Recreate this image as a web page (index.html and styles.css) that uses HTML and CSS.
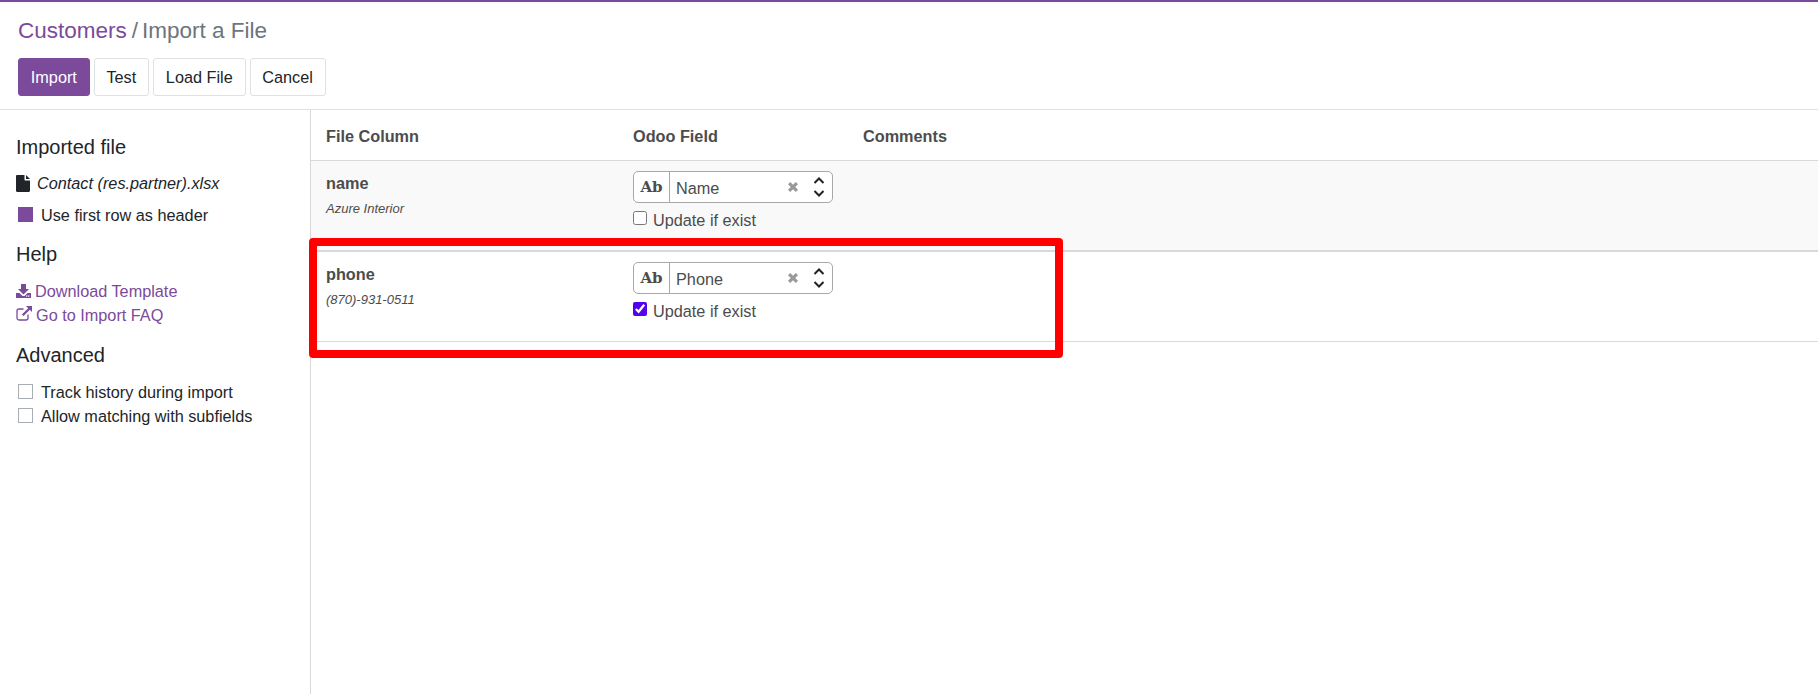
FILE: index.html
```html
<!DOCTYPE html>
<html lang="en">
<head>
<meta charset="utf-8">
<title>Import a File</title>
<link rel="stylesheet" href="styles.css">
</head>
<body>
<header class="control-panel">
  <div class="breadcrumb"><a class="crumb-link">Customers</a><span class="crumb-sep">/</span><span class="crumb-current">Import a File</span></div>
  <div class="buttons">
    <button class="btn btn-primary">Import</button>
    <button class="btn">Test</button>
    <button class="btn">Load File</button>
    <button class="btn">Cancel</button>
  </div>
</header>
<main class="content">
  <aside class="sidebar">
    <h4 class="side-title first">Imported file</h4>
    <div class="file-row">
      <svg class="icon-file" viewBox="0 0 14 17" preserveAspectRatio="none"><path d="M0 1.200C0 .5.5 0 1.200 0H8.500v4.800c0 .4.300.7.700.7H14v10.300c0 .7-.5 1.200-1.200 1.200H1.200C.5 17 0 16.500 0 15.800zM10 0l4 4h-4z"/></svg>
      <em>Contact (res.partner).xlsx</em>
    </div>
    <div class="check-row"><span class="box box-on"></span>Use first row as header</div>
    <h4 class="side-title help">Help</h4>
    <div class="links">
      <a class="side-link">
        <svg class="icon-dl" viewBox="0 0 15 14"><path d="M5 0h5v5h3L7.500 10.500 2 5h3zM0 9h3.500l2.500 2.500c.8.800 2.200.800 3 0L11.500 9H15v5H0zm11.500 3a.7.7 0 1 0 0 .1zm2 0a.7.7 0 1 0 0 .1z" fill-rule="evenodd"/></svg>Download Template</a>
      <a class="side-link">
        <svg class="icon-ext" viewBox="0 0 16 15"><path d="M12 8.500V12a2 2 0 0 1-2 2H3a2 2 0 0 1-2-2V5a2 2 0 0 1 2-2h4.500" fill="none" stroke="currentColor" stroke-width="1.300"/><path d="M10 0h6v6l-2.200-2.200-6.300 6.300-1.600-1.600 6.300-6.300z"/></svg>Go to Import FAQ</a>
    </div>
    <h4 class="side-title advanced">Advanced</h4>
    <div class="check-row tight"><span class="box"></span>Track history during import</div>
    <div class="check-row tight"><span class="box"></span>Allow matching with subfields</div>
  </aside>
  <section class="mapping">
    <div class="row head">
      <div class="col-a">File Column</div>
      <div class="col-b">Odoo Field</div>
      <div class="col-c">Comments</div>
    </div>
    <div class="row item odd">
      <div class="col-a"><div class="col-name">name</div><div class="col-sample">Azure Interior</div></div>
      <div class="col-b">
        <div class="select">
          <span class="type">Ab</span><span class="value">Name</span>
          <svg class="clear" viewBox="0 0 10 10"><path d="M0 2.200 2.200 0 5 2.800 7.800 0 10 2.200 7.200 5 10 7.800 7.800 10 5 7.200 2.200 10 0 7.800 2.800 5z"/></svg>
          <svg class="carets" viewBox="0 0 12 22"><path d="M1.500 7 6 2.500 10.500 7M1.500 15 6 19.500 10.500 15" fill="none" stroke="currentColor" stroke-width="2"/></svg>
        </div>
        <label class="update"><input type="checkbox" class="native">Update if exist</label>
      </div>
    </div>
    <div class="row item">
      <div class="col-a"><div class="col-name">phone</div><div class="col-sample">(870)-931-0511</div></div>
      <div class="col-b">
        <div class="select">
          <span class="type">Ab</span><span class="value">Phone</span>
          <svg class="clear" viewBox="0 0 10 10"><path d="M0 2.200 2.200 0 5 2.800 7.800 0 10 2.200 7.200 5 10 7.800 7.800 10 5 7.200 2.200 10 0 7.800 2.800 5z"/></svg>
          <svg class="carets" viewBox="0 0 12 22"><path d="M1.500 7 6 2.500 10.500 7M1.500 15 6 19.500 10.500 15" fill="none" stroke="currentColor" stroke-width="2"/></svg>
        </div>
        <label class="update"><input type="checkbox" class="native" checked>Update if exist</label>
      </div>
    </div>
  </section>
</main>
<div class="highlight"></div>
</body>
</html>
```
FILE: styles.css
```css
* { box-sizing: border-box; }
html, body { height: 100%; }
body {
  margin: 0;
  height: 694px;
  overflow: hidden;
  display: flex;
  flex-direction: column;
  background: #fff;
  color: #212529;
  font-family: "Liberation Sans", Arial, sans-serif;
  font-size: 16.25px;
  border-top: 2px solid #7c4a9b;
  position: relative;
}
.control-panel {
  height: 108px;
  padding: 15px 18px 0;
  border-bottom: 1px solid #dee2e6;
  flex: none;
}
.breadcrumb {
  font-size: 22.5px;
  line-height: 28px;
  display: flex;
  color: #6c757d;
}
.crumb-link { color: #7c4a9b; }
.crumb-sep { margin: 0 4px 0 5px; }
.buttons {
  display: flex;
  gap: 4px;
  margin-top: 13px;
}
.btn {
  height: 38px;
  padding: 1px 11.8px 0;
  font: inherit;
  color: #212529;
  background: #fff;
  border: 1px solid #dee2e6;
  border-radius: 3px;
}
.btn-primary {
  background: #7c4a9b;
  border-color: #7c4a9b;
  color: #fff;
}
.content {
  flex: 1;
  display: flex;
  min-height: 0;
}
.sidebar {
  width: 311px;
  flex: none;
  border-right: 1px solid #d9d9d9;
  padding: 0 16px;
}
.side-title {
  font-size: 20px;
  font-weight: 400;
  line-height: 24px;
  margin: 0;
}
.side-title.first { margin-top: 25px; }
.side-title.help { margin-top: 15px; }
.side-title.advanced { margin-top: 16px; }
.file-row {
  display: flex;
  align-items: center;
  margin-top: 12px;
  line-height: 24px;
}
.icon-file { width: 14px; height: 17px; margin-right: 7px; fill: #212529; }
.check-row {
  display: flex;
  align-items: center;
  margin-top: 8px;
  line-height: 24px;
  padding-left: 2px;
}
.check-row.tight { margin-top: 0; }
.advanced + .check-row { margin-top: 13px; }
.box {
  width: 15px;
  height: 15px;
  margin: -2px 8px 0 0;
  border: 1px solid #a8acb3;
  background: #fff;
}
.box-on { background: #7c4a9b; border-color: #7c4a9b; }
.links { margin-top: 13px; }
.side-link {
  display: flex;
  align-items: center;
  color: #7c4a9b;
  line-height: 24px;
  fill: currentColor;
}
.icon-dl { width: 15px; height: 14px; margin-right: 4px; }
.icon-ext { width: 16px; height: 15px; margin-right: 4px; margin-top: -4px; }
.mapping { flex: 1; color: #4c4c4c; }
.row { display: flex; padding-left: 15px; }
.head {
  height: 51px;
  align-items: center;
  padding-top: 2px;
  font-weight: 700;
  border-bottom: 1px solid #d9d9d9;
}
.col-a { width: 307px; flex: none; }
.col-b { width: 230px; flex: none; }
.item {
  height: 90px;
  padding-top: 10px;
  border-bottom: 1px solid #d9d9d9;
}
.item.odd { height: 91px; background: #f9f9f9; border-bottom: 2px solid #d9d9d9; }
.col-name { font-weight: 700; line-height: 24px; }
.col-sample { font-size: 13px; font-style: italic; line-height: 20px; margin-top: 4px; }
.select {
  width: 200px;
  height: 32px;
  display: flex;
  align-items: center;
  background: #fff;
  border: 1px solid #a8a8a8;
  border-radius: 5px;
}
.type {
  width: 36px;
  height: 100%;
  flex: none;
  border-right: 1px solid #a8a8a8;
  font-family: "DejaVu Serif", serif;
  font-weight: 700;
  font-size: 15px;
  line-height: 31px;
  text-align: center;
}
.value { flex: 1; padding: 3px 0 0 6px; }
.clear { width: 10px; height: 10px; fill: #999; margin-right: 15px; }
.carets { width: 12px; height: 22px; color: #222; margin-right: 7px; }
.update { display: flex; align-items: center; margin-top: 5px; line-height: 24px; }
.native {
  width: 14px;
  height: 14px;
  margin: -5px 6px 0 0;
  accent-color: #5500ee;
}
.highlight {
  position: absolute;
  left: 309px;
  top: 236px;
  width: 754px;
  height: 120px;
  border: 8px solid #f00;
  border-radius: 4px;
}
```
